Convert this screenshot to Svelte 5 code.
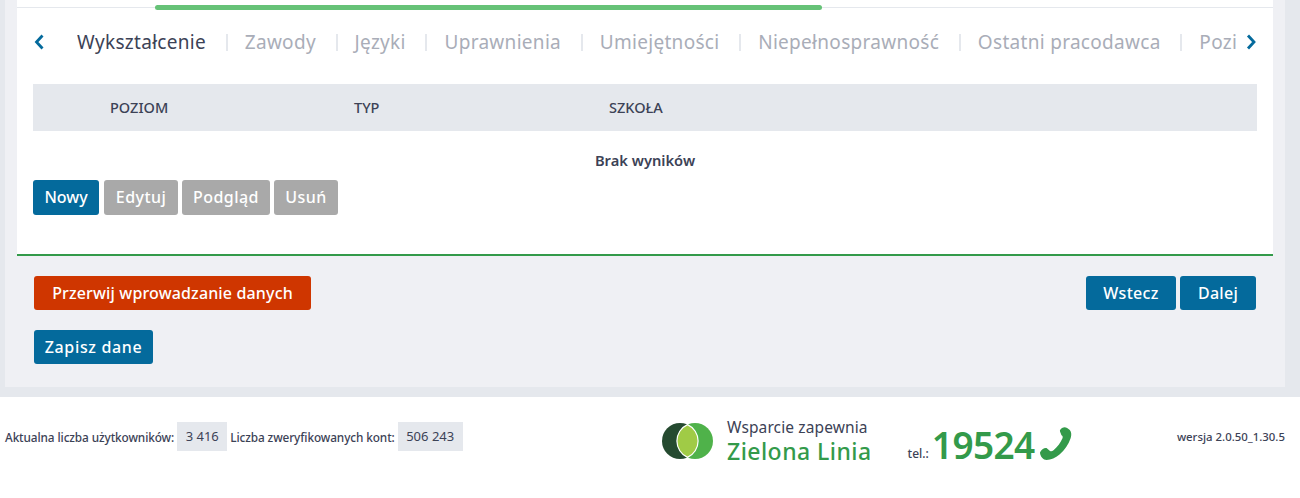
<script>
  const tabs = ['Zawody', 'Języki', 'Uprawnienia', 'Umiejętności', 'Niepełnosprawność', 'Ostatni pracodawca', 'Poziom'];
</script>

<div class="page">
  <main class="panel">
    <section class="card">
      <div class="progress"><div class="progress-fill"></div></div>

      <div class="tabs-row">
        <svg class="chev" width="12" height="18" viewBox="0 0 12 18"><path d="M9.500 2.500 3.500 9l6 6.500" /></svg>
        <div class="tabs">
          <span class="tab active">Wykształcenie</span>
          {#each tabs as t}
            <span class="sep"></span>
            <span class="tab">{t}</span>
          {/each}
        </div>
        <svg class="chev" width="12" height="18" viewBox="0 0 12 18"><path d="M3 2.500 9 9l-6 6.500" /></svg>
      </div>

      <div class="thead">
        <span>POZIOM</span>
        <span>TYP</span>
        <span>SZKOŁA</span>
      </div>
      <div class="empty">Brak wyników</div>
      <div class="actions">
        <button class="btn sm primary nowy">Nowy</button>
        <button class="btn sm muted edytuj">Edytuj</button>
        <button class="btn sm muted podglad">Podgląd</button>
        <button class="btn sm muted usun">Usuń</button>
      </div>
    </section>

    <div class="bottom">
      <div class="bottom-row">
        <button class="btn danger">Przerwij wprowadzanie danych</button>
        <div class="nav">
          <button class="btn primary wstecz">Wstecz</button>
          <button class="btn primary dalej">Dalej</button>
        </div>
      </div>
      <button class="btn primary zapisz">Zapisz dane</button>
    </div>
  </main>

  <footer>
    <div class="stats">
      <span>Aktualna liczba użytkowników:</span>
      <b class="badge">3 416</b>
      <span>Liczba zweryfikowanych kont:</span>
      <b class="badge">506 243</b>
    </div>
    <div class="support">
      <svg class="logo" width="51" height="36" viewBox="0 0 51 36">
        <circle cx="18" cy="18" r="18" fill="#254a30" />
        <circle cx="33" cy="18" r="18" fill="#4fb24a" />
        <path d="M25.500 1.600A18 18 0 0 1 25.500 34.400 18 18 0 0 1 25.500 1.600Z" fill="#a0cb46" stroke="#fff" stroke-width="1.200" />
      </svg>
      <div class="support-text">
        <div class="s1">Wsparcie zapewnia</div>
        <div class="s2">Zielona Linia</div>
      </div>
      <span class="tel">tel.:</span>
      <span class="num">19524</span>
      <svg class="phone" width="34" height="34" viewBox="0 0 34 34">
        <path d="M1 25.500c1-3 4.500-5 6.500-4.500l3.500 3c1.300.6 2.300.2 3.500-.8 4-3.400 7-7.400 9-12 .5-1.300.2-2.300-1-3L21 4.500c-.4-2 1.800-4 4.500-4.300 1.800.2 3.500 1.200 5.300 2.800 1.800 2.300 1.800 5 .9 8-2.200 6.500-6 12-11.200 16.500-4 3-8.500 5.500-13 5.500-3 0-6.500-3.500-6.500-7.500Z" fill="#339a4a" />
      </svg>
    </div>
    <div class="version">wersja 2.0.50_1.30.5</div>
  </footer>
</div>

<style>
  :global(body) {
    margin: 0;
    background: #fff;
    font-family: "Noto Sans", "Open Sans", sans-serif;
    color: #3c4256;
  }
  .page {
    width: 1300px;
    height: 498px;
    overflow: hidden;
  }
  .panel {
    background: #eff0f4;
    margin: 0;
    padding: 0 12px 0;
    border-left: 5px solid #e5e8ed;
    border-right: 15px solid #e5e8ed;
    border-bottom: 10px solid #e5e8ed;
    height: 387px;
    box-sizing: content-box;
    width: 1256px;
  }
  .card {
    background: #fff;
    height: 254px;
    border-bottom: 2px solid #339a4a;
    padding: 0 16px;
    box-sizing: content-box;
    width: 1224px;
  }
  .progress {
    height: 5px;
    padding-top: 5px;
    margin: 0 -16px;
    display: flex;
    align-items: center;
    background: linear-gradient(#e5e8ed, #e5e8ed) 0 7px / 100% 1px no-repeat;
  }
  .progress-fill {
    width: 667px;
    height: 5px;
    margin-left: 138px;
    border-radius: 3px;
    background: #66c277;
  }
  .tabs-row {
    display: flex;
    align-items: center;
    height: 34px;
    margin-top: 15px;
  }
  .chev {
    flex: none;
    fill: none;
    stroke: #046a9c;
    stroke-width: 2.800;
  }
  .tabs {
    flex: none;
    width: 1159px;
    margin: 0 9px 0 32px;
    overflow: hidden;
    display: flex;
    align-items: center;
    white-space: nowrap;
    font-size: 19px;
    letter-spacing: 0.3px;
    color: #a9adb8;
  }
  .tab { flex: none; }
  .tab.active { color: #3c4256; }
  .sep {
    flex: none;
    width: 2px;
    height: 17px;
    background: #e5e8ed;
    margin: 0 17px 0 19.700px;
  }
  .thead {
    display: grid;
    grid-template-columns: 244px 255px 1fr;
    align-items: center;
    height: 46px;
    padding-bottom: 1px;
    margin-top: 25px;
    padding-left: 77px;
    background: #e5e8ed;
    font-size: 14.500px;
    font-weight: 500;
  }
  .empty {
    text-align: center;
    font-size: 14.700px;
    font-weight: 600;
    height: 49px;
    line-height: 59px;
  }
  .actions {
    display: flex;
    gap: 4px;
  }
  .btn {
    border: 0;
    border-radius: 3px;
    color: #fff;
    font-family: inherit;
    font-size: 16px;
    font-weight: 500;
    letter-spacing: 0.3px;
    height: 34px;
    padding: 0;
    display: block;
  }
  .btn.sm { height: 35px; letter-spacing: 0; padding-bottom: 2px; }
  .btn.muted { letter-spacing: 0.45px; }
  .nowy { width: 66px; margin-right: 1px; }
  .edytuj { width: 74px; }
  .podglad { width: 88px; }
  .usun { width: 64px; }
  .primary { background: #046a9c; }
  .muted { background: #a9a9a9; }
  .danger { background: #cf3600; width: 277px; letter-spacing: 0.15px; }
  .wstecz { width: 90px; }
  .dalej { width: 76px; }
  .zapisz { width: 119px; margin-top: 20px; letter-spacing: 0.65px; }
  .bottom { padding: 20px 17px 0 17px; }
  .bottom-row {
    display: flex;
    justify-content: space-between;
  }
  .nav { display: flex; gap: 4px; }
  footer {
    display: flex;
    align-items: center;
    height: 79px;
    padding: 0 15px 0 5px;
  }
  .stats {
    display: flex;
    align-items: center;
    gap: 3px;
    font-size: 11.800px;
    letter-spacing: -0.1px;
    font-weight: 500;
    width: 657px;
    flex: none;
  }
  .badge {
    background: #e5e8ed;
    font-weight: 400;
    font-size: 13px;
    letter-spacing: 0;
    height: 29px;
    line-height: 29px;
    padding: 0 8.500px;
  }
  .support {
    display: flex;
    align-items: center;
    flex: 1;
    padding-top: 9px;
  }
  .logo { flex: none; }
  .support-text { margin-left: 14px; margin-top: 2px; }
  .s1 { font-size: 15.500px; line-height: 19px; letter-spacing: 0.12px; }
  .s2 { font-size: 23px; line-height: 29px; font-weight: 500; letter-spacing: 0.45px; color: #339a4a; }
  .tel { font-size: 12px; font-weight: 500; margin: 24px 0 0 36px; }
  .num { font-size: 37px; font-weight: 600; letter-spacing: -0.6px; line-height: 40px; color: #339a4a; margin: 8px 0 0 3px; }
  .phone { margin: 6px 0 0 4px; }
  .version { font-size: 11.400px; font-weight: 500; flex: none; }
</style>
